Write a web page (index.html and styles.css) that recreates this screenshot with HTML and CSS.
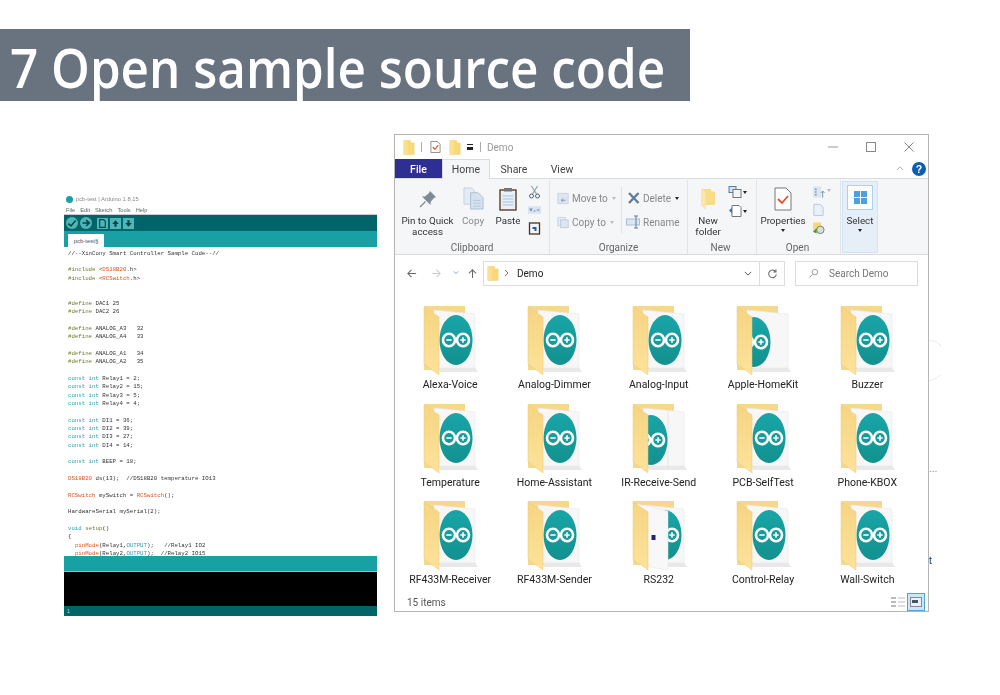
FILE: index.html
```html
<!DOCTYPE html>
<html lang="en">
<head>
<meta charset="utf-8">
<title>7 Open sample source code</title>
<link rel="stylesheet" href="styles.css">
</head>
<body>
<svg class="defs" width="0" height="0" aria-hidden="true">
  <defs>
    <linearGradient id="flap" x1="0" y1="0" x2="0" y2="1"><stop offset="0" stop-color="#f6d582"/><stop offset="1" stop-color="#fce29a"/></linearGradient>
    <linearGradient id="logo" x1="0" y1="0" x2="0" y2="1"><stop offset="0" stop-color="#19a5a8"/><stop offset="1" stop-color="#12918f"/></linearGradient>
    <clipPath id="afterflap"><rect x="17" y="0" width="43" height="74"/></clipPath>
    <symbol id="back" viewBox="0 0 60 74">
      <path d="M4 2H45V12H18V66H4Z" fill="#f5d88c"/>
      <path d="M20 68H58L54 62H18Z" fill="#e9e9e9"/>
      <path d="M14 6L55 10V64H14Z" fill="#f7f7f7" stroke="#e8e8e8" stroke-width=".6"/>
    </symbol>
    <symbol id="ard" viewBox="0 0 36 52">
      <ellipse cx="18" cy="26" rx="16.500" ry="25" fill="url(#logo)"/>
      <ellipse cx="11" cy="26" rx="6" ry="6.300" fill="none" stroke="#fff" stroke-width="2.600"/>
      <ellipse cx="25" cy="26" rx="6" ry="6.300" fill="none" stroke="#fff" stroke-width="2.600"/>
      <path d="M8.300 25.200h5.400v1.600H8.300ZM22.300 25.200h5.400v1.600h-5.400ZM24.200 23.300h1.600v5.400h-1.600Z" fill="#fff"/>
    </symbol>
    <symbol id="front" viewBox="0 0 60 74">
      <path d="M4 3L19 13V71L4 60Z" fill="url(#flap)" stroke="#eec874" stroke-width=".5"/>
    </symbol>
    <symbol id="fol" viewBox="0 0 60 74">
      <use href="#back" width="60" height="74"/>
      <use href="#ard" x="18" y="10" width="36" height="52"/>
      <use href="#front" width="60" height="74"/>
    </symbol>
    <symbol id="fold" viewBox="0 0 20 26">
      <path d="M1 1H13V5H19V25H1Z" fill="#f8d878" stroke="#e8c364" stroke-width=".6"/>
      <path d="M1 1L8 4V25H1Z" fill="#fbe08f"/>
    </symbol>
  </defs>
</svg>

<main class="page">
  <h1 class="banner"><span>7 Open sample source code</span></h1>

  <section class="ide">
    <div class="ide-title"><span class="ide-dot"></span>pcb-test | Arduino 1.8.15</div>
    <div class="ide-menu"><span>File</span><span>Edit</span><span>Sketch</span><span>Tools</span><span>Help</span></div>
    <div class="ide-tools">
      <span class="round"><svg viewBox="0 0 10 10"><path d="M2 5.500L4.200 7.500L8 3" fill="none" stroke="#044" stroke-width="1.300"/></svg></span>
      <span class="round"><svg viewBox="0 0 10 10"><path d="M2 5H7M5 2.500L7.800 5L5 7.500" fill="none" stroke="#044" stroke-width="1.300"/></svg></span>
      <span class="square first"><svg viewBox="0 0 10 10"><path d="M2.500 1.500H6L7.500 3V8.500H2.500Z" fill="none" stroke="#044"/></svg></span>
      <span class="square"><svg viewBox="0 0 10 10"><path d="M5 2L8 5.500H6V8H4V5.500H2Z" fill="#044"/></svg></span>
      <span class="square"><svg viewBox="0 0 10 10"><path d="M5 8L2 4.500H4V2H6V4.500H8Z" fill="#044"/></svg></span>
    </div>
    <div class="ide-tabs"><span class="ide-tab">pcb-test§</span></div>
    <pre class="code">//--XinCony Smart Controller Sample Code--//

<b class="k">#include</b> &lt;<b class="r">DS18B20</b>.h&gt;
<b class="k">#include</b> &lt;<b class="r">RCSwitch</b>.h&gt;


<b class="k">#define</b> DAC1 25
<b class="k">#define</b> DAC2 26

<b class="k">#define</b> ANALOG_A3   32
<b class="k">#define</b> ANALOG_A4   33

<b class="k">#define</b> ANALOG_A1   34
<b class="k">#define</b> ANALOG_A2   35

<b class="t">const int</b> Relay1 = 2;
<b class="t">const int</b> Relay2 = 15;
<b class="t">const int</b> Relay3 = 5;
<b class="t">const int</b> Relay4 = 4;

<b class="t">const int</b> DI1 = 36;
<b class="t">const int</b> DI2 = 39;
<b class="t">const int</b> DI3 = 27;
<b class="t">const int</b> DI4 = 14;

<b class="t">const int</b> BEEP = 18;

<b class="r">DS18B20</b> ds(13);  //DS18B20 temperature IO13

<b class="r">RCSwitch</b> mySwitch = <b class="r">RCSwitch</b>();

HardwareSerial mySerial(2);

<b class="t">void</b> <b class="k">setup</b>()
{
  <b class="r">pinMode</b>(Relay1,<b class="t">OUTPUT</b>);   //Relay1 IO2
  <b class="r">pinMode</b>(Relay2,<b class="t">OUTPUT</b>);  //Relay2 IO15</pre>
    <div class="ide-msg"></div>
    <div class="ide-console"></div>
    <div class="ide-status">1</div>
  </section>

  <section class="win">
    <header class="win-title">
      <svg class="fold-sm"><use href="#fold"/></svg>
      <span class="qsep"></span>
      <svg class="q-prop" viewBox="0 0 12 14"><path d="M1 1H8L11 4V13H1Z" fill="#fff" stroke="#8a8a8a"/><path d="M3 7L5.300 9.500L9 5" fill="none" stroke="#e0532a" stroke-width="1.300"/></svg>
      <svg class="fold-sm"><use href="#fold"/></svg>
      <span class="q-caret"></span>
      <span class="qsep"></span>
      <span class="win-name">Demo</span>
      <span class="caps">
        <svg viewBox="0 0 10 10"><path d="M0 5H10" stroke="#999"/></svg>
        <svg viewBox="0 0 10 10"><rect x=".5" y=".5" width="9" height="9" fill="none" stroke="#888"/></svg>
        <svg viewBox="0 0 10 10"><path d="M.5 .5L9.500 9.500M9.500 .5L.5 9.500" stroke="#888"/></svg>
      </span>
    </header>
    <nav class="tabs">
      <span class="tab file">File</span>
      <span class="tab on">Home</span>
      <span class="tab">Share</span>
      <span class="tab">View</span>
      <span class="tab-end">
        <svg class="chev" viewBox="0 0 10 6"><path d="M1 5L5 1L9 5" fill="none" stroke="#999"/></svg>
        <span class="help">?</span>
      </span>
    </nav>
    <div class="ribbon">
      <div class="grp g-clip">
        <div class="grp-body">
          <div class="big w-pin">
            <svg class="ic-pin" viewBox="0 0 18 18"><path d="M11 1L17 7L15 8L11.500 12L11.500 15L3 6.500L6 6.500L10 3Z" fill="#7f8a94"/><path d="M6.500 11.500L1 17" stroke="#7f8a94" stroke-width="1.200"/></svg>
            <span>Pin to Quick<br>access</span>
          </div>
          <div class="big dim w-copy">
            <svg class="ic-copy" viewBox="0 0 22 24"><path d="M1 1H9L12 4V18H1Z" fill="#e3ebf5" stroke="#c4d2e3"/><path d="M8 6H16L21 11V23H8Z" fill="#d6e2f0" stroke="#a9bdd5"/><path d="M10.500 14H18.500M10.500 17H18.500M10.500 20H18.500" stroke="#b4c8e0"/></svg>
            <span>Copy</span>
          </div>
          <div class="big w-paste">
            <svg class="ic-paste" viewBox="0 0 18 24"><rect x="1" y="3" width="16" height="20" fill="#e8f0fa" stroke="#5a3f24" stroke-width="1.400"/><rect x="5" y="1" width="8" height="3.500" fill="#777"/><path d="M3.500 9H14.500M3.500 12H14.500M3.500 15H14.500M3.500 18H14.500" stroke="#a9c0dc"/></svg>
            <span>Paste</span>
          </div>
          <div class="stack3">
            <svg viewBox="0 0 12 14"><path d="M3 1L8 9M9 1L4 9" stroke="#8ea0b3" stroke-width="1.200"/><circle cx="3" cy="11" r="2" fill="none" stroke="#516478"/><circle cx="9" cy="11" r="2" fill="none" stroke="#516478"/></svg>
            <svg viewBox="0 0 14 10"><rect x="0" y="1" width="14" height="8" fill="#d8e4f1"/><path d="M2 3L3.200 6L4.400 3M6 6H8M9.500 5H12.500" stroke="#4d6a8a" fill="none" stroke-width=".8"/></svg>
            <svg viewBox="0 0 12 14"><rect x="1" y="2" width="10" height="11" fill="#f5f5f5" stroke="#4a3320" stroke-width="1.300"/><path d="M4 6H8V10H6V8H4Z" fill="#1f5fa8"/></svg>
          </div>
        </div>
        <div class="grp-name">Clipboard</div>
      </div>
      <div class="grp g-org">
        <div class="grp-body org">
          <div class="col-org col-a">
            <div class="row"><svg viewBox="0 0 14 14"><rect x="1" y="1" width="12" height="12" fill="#dbe6f2" stroke="#c6d3e2"/><path d="M10 9H5M7 7L5 9L7 11" stroke="#6e8cab" fill="none"/></svg>Move to<i class="caret pale"></i></div>
            <div class="row"><svg viewBox="0 0 14 14"><rect x="1" y="1" width="9" height="10" fill="#e3ebf4" stroke="#c6d3e2"/><rect x="4" y="4" width="9" height="9" fill="#dbe6f2" stroke="#bccbdc"/></svg>Copy to<i class="caret pale"></i></div>
          </div>
          <span class="vline"></span>
          <div class="col-org col-b">
            <div class="row"><svg viewBox="0 0 15 14"><path d="M3 2L12.500 12M12.500 2L3 12" stroke="#5f7d9b" stroke-width="2.400"/></svg>Delete<i class="caret"></i></div>
            <div class="row"><svg viewBox="0 0 15 14"><rect x=".5" y="4" width="13" height="6" fill="#dbe6f2" stroke="#a9bdd5"/><path d="M10 1V13M8 1H12M8 13H12" stroke="#5f7d9b"/></svg>Rename</div>
          </div>
        </div>
        <div class="grp-name">Organize</div>
      </div>
      <div class="grp g-new">
        <div class="grp-body">
          <div class="big w-new">
            <svg class="ic-new" viewBox="0 0 16 22"><path d="M1 1H11V3L15 4V17H5.500V21L1 18Z" fill="#f8dc88"/><path d="M1 1L5.500 4V21L1 18Z" fill="#fbe7ad"/></svg>
            <span>New<br>folder</span>
          </div>
          <div class="stack2">
            <div class="mini"><svg viewBox="0 0 14 13"><rect x="1" y="1" width="7" height="6" fill="#d3e2f2" stroke="#5b7ea5"/><rect x="5" y="4" width="8" height="8" fill="#f5f5f5" stroke="#777"/></svg><i class="caret"></i></div>
            <div class="mini"><svg viewBox="0 0 14 13"><path d="M4 1H11L13 3V12H4Z" fill="#fff" stroke="#777"/><path d="M1 6L4 3V9Z" fill="#2f7ad1"/></svg><i class="caret"></i></div>
          </div>
        </div>
        <div class="grp-name">New</div>
      </div>
      <div class="grp g-open">
        <div class="grp-body">
          <div class="big w-prop">
            <svg class="ic-prop" viewBox="0 0 18 24"><path d="M1 1H12L17 6V23H1Z" fill="#fff" stroke="#777"/><path d="M4 12L8 16L14 9" fill="none" stroke="#e0532a" stroke-width="1.800"/></svg>
            <span>Properties</span>
            <i class="caret"></i>
          </div>
          <div class="stack3 s-open">
            <svg viewBox="0 0 14 14"><rect x="1" y="1" width="9" height="12" fill="#dbe6f2"/><path d="M3 4H5M3 7H5M3 10H5" stroke="#4d6a8a"/><path d="M11.500 13V6M9.500 8L11.500 6L13.500 8" fill="none" stroke="#6e8cab"/></svg>
            <svg viewBox="0 0 14 14"><path d="M2 1H9L12 4V13H2Z" fill="#e8f0fa" stroke="#b4c8e0"/></svg>
            <svg viewBox="0 0 14 14"><rect x="1" y="1" width="9" height="9" fill="#f8d878"/><circle cx="9" cy="9" r="4" fill="#ddd" stroke="#777"/><path d="M1 11L5 7V13Z" fill="#3aa52c"/></svg>
          </div>
          <i class="caret pale open-c"></i>
        </div>
        <div class="grp-name">Open</div>
      </div>
      <div class="grp g-sel">
        <div class="sel-box">
          <span class="sel-ic"><svg viewBox="0 0 15 15"><path d="M1 1H7V7H1ZM8 1H14V7H8ZM1 8H7V14H1ZM8 8H14V14H8Z" fill="#4aa0e0"/></svg></span>
          <span>Select</span>
          <i class="caret"></i>
        </div>
      </div>
    </div>
    <div class="addr">
      <svg class="nav back" viewBox="0 0 12 12"><path d="M11 6H2M6 2L2 6L6 10" fill="none" stroke="#666" stroke-width="1.100"/></svg>
      <svg class="nav fwd" viewBox="0 0 12 12"><path d="M1 6H10M6 2L10 6L6 10" fill="none" stroke="#ccc" stroke-width="1.100"/></svg>
      <svg class="nav-d" viewBox="0 0 8 5"><path d="M1 1L4 4L7 1" fill="none" stroke="#4a8fd0"/></svg>
      <svg class="nav up" viewBox="0 0 12 12"><path d="M6 11V2M2 6L6 2L10 6" fill="none" stroke="#666" stroke-width="1.100"/></svg>
      <div class="crumb">
        <svg class="fold-sm"><use href="#fold"/></svg>
        <svg class="sep" viewBox="0 0 5 8"><path d="M1 1L4 4L1 7" fill="none" stroke="#777"/></svg>
        <span>Demo</span>
        <svg class="drop" viewBox="0 0 10 6"><path d="M1 1L5 5L9 1" fill="none" stroke="#555" stroke-width="1.200"/></svg>
        <span class="refresh"><svg viewBox="0 0 12 12"><path d="M9.500 4A4.200 4.200 0 1 0 10.200 7M9.800 1.500V4.400H7" fill="none" stroke="#666" stroke-width="1.100"/></svg></span>
      </div>
      <div class="search"><svg viewBox="0 0 12 12"><circle cx="7.500" cy="4.500" r="3" fill="none" stroke="#999"/><path d="M5 7L1.500 10.500" stroke="#999"/></svg>Search Demo</div>
    </div>
    <div class="grid">
      <figure class="item"><svg class="ficon"><use href="#fol"/></svg><figcaption>Alexa-Voice</figcaption></figure>
      <figure class="item"><svg class="ficon"><use href="#fol"/></svg><figcaption>Analog-Dimmer</figcaption></figure>
      <figure class="item"><svg class="ficon"><use href="#fol"/></svg><figcaption>Analog-Input</figcaption></figure>
      <figure class="item"><svg class="ficon" viewBox="0 0 60 74"><use href="#back" width="60" height="74"/><g clip-path="url(#afterflap)"><use href="#ard" x="3" y="12" width="36" height="52"/></g><use href="#front" width="60" height="74"/></svg><figcaption>Apple-HomeKit</figcaption></figure>
      <figure class="item"><svg class="ficon"><use href="#fol"/></svg><figcaption>Buzzer</figcaption></figure>
      <figure class="item"><svg class="ficon"><use href="#fol"/></svg><figcaption>Temperature</figcaption></figure>
      <figure class="item"><svg class="ficon"><use href="#fol"/></svg><figcaption>Home-Assistant</figcaption></figure>
      <figure class="item"><svg class="ficon" viewBox="0 0 60 74"><use href="#back" width="60" height="74"/><path d="M39 8V68" stroke="#e6e6e6"/><g clip-path="url(#afterflap)"><use href="#ard" x="4" y="12" width="36" height="52"/></g><use href="#front" width="60" height="74"/></svg><figcaption>IR-Receive-Send</figcaption></figure>
      <figure class="item"><svg class="ficon"><use href="#fol"/></svg><figcaption>PCB-SelfTest</figcaption></figure>
      <figure class="item"><svg class="ficon"><use href="#fol"/></svg><figcaption>Phone-KBOX</figcaption></figure>
      <figure class="item"><svg class="ficon"><use href="#fol"/></svg><figcaption>RF433M-Receiver</figcaption></figure>
      <figure class="item"><svg class="ficon"><use href="#fol"/></svg><figcaption>RF433M-Sender</figcaption></figure>
      <figure class="item"><svg class="ficon" viewBox="0 0 60 74"><use href="#back" width="60" height="74"/><use href="#ard" x="18" y="10" width="36" height="52"/><path d="M8 5L39 12V71L14 67Z" fill="#f8f8f8" stroke="#e4e4e4" stroke-width=".5"/><rect x="22.500" y="36" width="4" height="5" fill="#22227a"/><use href="#front" width="60" height="74"/></svg><figcaption>RS232</figcaption></figure>
      <figure class="item"><svg class="ficon"><use href="#fol"/></svg><figcaption>Control-Relay</figcaption></figure>
      <figure class="item"><svg class="ficon"><use href="#fol"/></svg><figcaption>Wall-Switch</figcaption></figure>
    </div>
    <footer class="status">
      <span>15 items</span>
      <span class="views">
        <svg class="v-list" viewBox="0 0 14 12"><path d="M0 1H5V3H0ZM0 5H5V7H0ZM0 9H5V11H0Z" fill="#bbb"/><path d="M7 2H14M7 6H14M7 10H14" stroke="#bbb"/></svg>
        <span class="v-on"><svg viewBox="0 0 12 10"><rect x=".5" y=".5" width="11" height="9" fill="#eef" stroke="#889"/><rect x="2" y="3" width="6" height="3" fill="#456"/></svg></span>
      </span>
    </footer>
  </section>
  <svg class="ghost" viewBox="0 0 14 50"><path d="M0 6C6 5 10 8 12 12M0 46C4 45 8 43 12 40" fill="none" stroke="#f0f0f0" stroke-width="1.500"/></svg>
  <span class="stray s1">t</span>
  <span class="stray s2">...</span>
</main>
</body>
</html>
```
FILE: styles.css
```css
* { box-sizing: border-box; }
html, body { margin: 0; padding: 0; background: #fff; }
body { width: 1000px; height: 695px; overflow: hidden; font-family: "Liberation Sans", Arial, sans-serif; }
.defs { position: absolute; }
.page { position: relative; width: 1000px; height: 695px; }

/* Banner */
.banner { position: absolute; left: 0; top: 29px; width: 690px; height: 72px; margin: 0; padding: 0 0 0 10px;
  background: #69737f; color: #fff; font: 600 54px/76px "Open Sans", sans-serif; white-space: nowrap; }
.banner span { display: inline-block; transform: scaleX(.914); transform-origin: 0 50%; }

/* Arduino IDE window */
.ide { position: absolute; left: 64px; top: 190px; width: 313px; height: 426px; display: flex; flex-direction: column; overflow: hidden; filter: blur(.3px); }
.ide-title { height: 15px; padding-top: 3px; display: flex; align-items: center; gap: 3px; padding-left: 2px; font-size: 5.800px; color: #888; }
.ide-dot { width: 7px; height: 7px; border-radius: 50%; background: #17a1a5; }
.ide-menu { height: 10px; display: flex; gap: 5px; align-items: center; padding-left: 2px; font-size: 5.700px; color: #666; border-bottom: 1px solid #ccc; }
.ide-tools { height: 16px; background: #006468; display: flex; align-items: center; gap: 2px; padding-left: 2px; flex: none; }
.round { width: 12px; height: 12px; border-radius: 50%; background: #4db6b9; display: flex; }
.square { width: 11px; height: 11px; background: #4db6b9; display: flex; }
.square.first { margin-left: 3px; }
.round svg, .square svg { width: 100%; height: 100%; }
.ide-tabs { height: 16px; background: #17a1a5; padding: 3px 0 0 4px; flex: none; }
.ide-tab { display: block; width: 36px; height: 13px; background: #fff; border-radius: 1px 1px 0 0; font-size: 6px; line-height: 14px; text-align: center; color: #555; }
.code { flex: 1; min-height: 0; margin: 0; padding: 2.800px 0 0 4px; font: 5.720px/8.340px "Liberation Mono", monospace; color: #333; overflow: hidden; }
.code b { font-weight: 400; }
.k { color: #6f7a2a; }
.r { color: #d9561c; }
.t { color: #2aa3ad; }
.ide-msg { height: 16px; background: #17a1a5; flex: none; border-bottom: 1px solid #7cc; }
.ide-console { height: 34px; background: #000; flex: none; }
.ide-status { height: 10px; background: #006468; flex: none; color: #cde; font-size: 5px; line-height: 10px; padding-left: 3px; }

/* Explorer window */
.win { position: absolute; left: 394px; top: 134px; width: 535px; height: 478px; background: #fff; border: 1px solid #b4b4b4; display: flex; flex-direction: column; font-size: 10.500px; font-family: Roboto, sans-serif; color: #333; filter: blur(.25px); }
.win-title { height: 24px; display: flex; align-items: center; padding-left: 8px; flex: none; }
.fold-sm { width: 12px; height: 15px; flex: none; }
.qsep { width: 1px; height: 10px; background: #aaa; margin: 0 8px 0 6px; }
.q-prop { width: 11px; height: 14px; margin-right: 8px; }
.q-caret { width: 6px; height: 6px; margin-left: 6px; border-top: 1px solid #222; border-bottom: 3px solid #222; }
.q-caret + .qsep { margin: 0 6px 0 7px; }
.win-name { color: #999; font-size: 10px; }
.caps { margin-left: auto; display: flex; gap: 28px; padding-right: 14px; }
.caps svg { width: 10px; height: 10px; }
.tabs { height: 20px; flex: none; display: flex; align-items: stretch; border-bottom: 1px solid #dadbdc; }
.tab { width: 48px; text-align: center; line-height: 21px; color: #444; }
.tab.file { width: 47px; background: #2e2e94; color: #fff; font-weight: 500; }
.tab.on { width: 48px; height: 20px; background: #f5f6f7; border: 1px solid #dadbdc; border-bottom: 0; line-height: 19px; }
.tab-end { margin-left: auto; display: flex; align-items: center; gap: 8px; padding-right: 2px; }
.chev { width: 8px; height: 5px; }
.help { width: 14px; height: 14px; border-radius: 50%; background: #0a5fb4; color: #fff; font: 700 10.500px/14px "Liberation Sans", sans-serif; text-align: center; }
.ribbon { height: 76px; flex: none; background: #f5f6f7; border-bottom: 1px solid #dadbdc; display: flex; padding-top: 1px; }
.grp { display: flex; flex-direction: column; border-right: 1px solid #e2e3e4; flex: none; }
.grp-body { height: 60px; flex: none; display: flex; }
.grp-name { height: 14px; line-height: 15px; text-align: center; color: #666; font-size: 10px; }
.g-clip { width: 155px; }
.g-org { width: 138px; }
.g-new { width: 69px; }
.g-new .grp-name { padding-right: 3px; }
.g-open { width: 84px; }
.g-open .grp-name { padding-right: 2px; }
.g-sel { flex: 1; border: 0; padding-left: 1px; }
.big { display: flex; flex-direction: column; align-items: center; line-height: 11px; font-size: 9.800px; text-align: center; color: #333; flex: none; }
.big.dim { color: #888; }
.w-pin { width: 65px; }
.w-copy { width: 26px; }
.w-paste { width: 44px; }
.ic-pin { width: 18px; height: 18px; margin: 10px 0 6.500px; }
.ic-copy { width: 21px; height: 23px; margin: 7px 0 4.500px; }
.ic-paste { width: 18px; height: 24px; margin: 7px 0 3.500px; }
.stack3 { width: 14px; display: flex; flex-direction: column; gap: 4px; padding-top: 5px; margin-left: -2.500px; }
.stack3 svg { width: 13px; height: 14px; }
.org { padding: 10px 0 0 7px; }
.col-org { display: flex; flex-direction: column; gap: 8px; flex: none; }
.col-a { width: 64px; }
.col-b { margin-left: 4px; }
.row { height: 16px; display: flex; align-items: center; font-size: 10px; color: #888; white-space: nowrap; }
.col-a .row svg { width: 12px; height: 13px; margin-right: 3px; }
.col-b .row svg { width: 15px; height: 14px; margin-right: 2px; }
.vline { width: 1px; height: 46px; background: #e0e1e2; margin-top: -3px; flex: none; }
.caret { display: inline-block; flex: none; width: 0; height: 0; margin-left: 4px; border: 2.500px solid transparent; border-top: 3px solid #222; border-bottom: 0; }
.caret.pale { border-top-color: #bbb; }
.w-new { width: 40px; }
.ic-new { width: 16px; height: 22px; margin: 8px 0 4.500px; }
.stack2 { display: flex; flex-direction: column; gap: 5px; padding-top: 5px; }
.mini { display: flex; align-items: center; }
.mini svg { width: 14px; height: 14px; }
.mini .caret { margin-left: 1px; }
.w-prop { width: 52px; }
.ic-prop { width: 18px; height: 24px; margin: 7px 0 3.500px; }
.w-prop .caret { margin: 3px 0 0; }
.s-open { margin-left: 3px; }
.open-c { margin: 9px 0 0 1px; }
.sel-box { width: 36px; height: 72px; margin-top: 1px; background: #e6eff8; border: 1px solid #cfe3f5; display: flex; flex-direction: column; align-items: center; font-size: 9.800px; line-height: 11px; }
.sel-ic { width: 26px; height: 25px; margin: 3px 0 4.500px; background: #fff; border: 1px solid #a9d3f2; display: flex; align-items: center; justify-content: center; }
.sel-ic svg { width: 15px; height: 15px; }
.sel-box .caret { margin: 3px 0 0; }
.addr { height: 36px; flex: none; display: flex; align-items: center; padding-left: 11px; }
.nav { width: 11px; height: 11px; flex: none; }
.back { margin-right: 14px; }
.fwd { margin-right: 11px; }
.nav-d { width: 6px; height: 5px; margin: 0 8px 2px 0; flex: none; }
.up { margin-right: 5px; }
.crumb { width: 302px; height: 25px; border: 1px solid #dcdcdc; display: flex; align-items: center; padding-left: 3px; font-size: 10px; color: #222; flex: none; }
.crumb .sep { width: 5px; height: 8px; margin: 0 8px 0 5px; }
.drop { width: 8px; height: 5px; margin-left: auto; margin-right: 7px; }
.refresh { width: 25px; height: 23px; border-left: 1px solid #dcdcdc; display: flex; align-items: center; justify-content: center; }
.refresh svg { width: 11px; height: 11px; }
.search { width: 123px; height: 25px; margin-left: 10px; border: 1px solid #dcdcdc; display: flex; align-items: center; gap: 10px; padding-left: 12px; color: #777; font-size: 10px; flex: none; }
.search svg { width: 11px; height: 11px; }
.grid { flex: 1; min-height: 0; display: grid; grid-template-columns: repeat(5, 104.300px); grid-auto-rows: 97.500px; padding: 13px 0 0 3px; }
.item { margin: 0; display: flex; flex-direction: column; align-items: center; }
.ficon { width: 60px; height: 74px; overflow: visible; flex: none; }
.item figcaption { font-size: 10.500px; line-height: 14px; margin-top: 0; color: #222; white-space: nowrap; }
.status { height: 22px; flex: none; display: flex; align-items: center; justify-content: space-between; padding: 4px 3px 0 12px; font-size: 10px; color: #555; }
.views { display: flex; align-items: center; gap: 2px; }
.v-list { width: 14px; height: 12px; }
.v-on { width: 18px; height: 18px; background: #cde6f7; border: 1px solid #4da3df; display: flex; align-items: center; justify-content: center; }
.v-on svg { width: 12px; height: 10px; }

/* Fragments of the page behind the window */
.stray { position: absolute; font: 10px/12px "Liberation Sans", sans-serif; color: #333; }
.s1 { left: 929px; top: 555px; }
.s2 { left: 929px; top: 463px; color: #888; }
.ghost { position: absolute; left: 929px; top: 335px; width: 14px; height: 50px; }
```
